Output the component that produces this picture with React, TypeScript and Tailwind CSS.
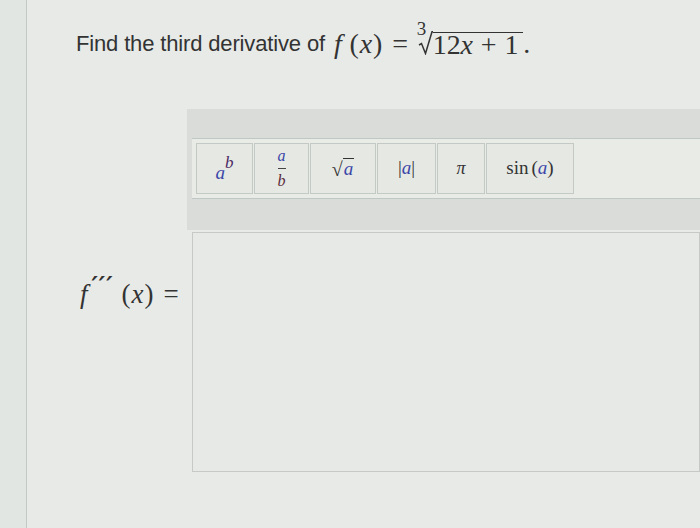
import React from "react";

// ---------------------------------------------------------------------------
// Small math helpers (serif italic, like the rendered TeX in the page)
// ---------------------------------------------------------------------------
const MATH = "font-['Liberation_Serif','DejaVu_Serif',serif]";

function V({ children, c = "" }: { children: React.ReactNode; c?: string }) {
  return <span className={`italic ${c}`}>{children}</span>;
}

// radical sign drawn as a stroke, the bar is the content's top border
function RadicalTick() {
  return (
    <svg width="15" height="24" viewBox="0 0 15 24" className="shrink-0">
      <path d="M1 14 L3.5 12.5 L7.5 22.5 L14 0.8 L15 0.8" fill="none" stroke="#333" strokeWidth="1.5" />
    </svg>
  );
}

// ---------------------------------------------------------------------------
// Toolbar buttons
// ---------------------------------------------------------------------------
const BTN =
  "flex items-center justify-center h-[51px] border border-[#c3cac6] bg-[#e6e8e4] text-[#333] " +
  MATH;

function Toolbar() {
  return (
    <div className="flex items-center gap-[1px] border-y border-[#bfc8c4] bg-[#e9ebe7] pl-[4px] py-[4px]">
      <div className={`${BTN} w-[57px] text-[19px]`}>
        <span className="relative top-[5px]">
          <V c="text-[#3a46a8]">a</V>
        </span>
        <span className="relative -top-[6px] text-[17px]">
          <V c="text-[#4b2a63]">b</V>
        </span>
      </div>
      <div className={`${BTN} w-[55px] text-[16px]`}>
        <div className="flex flex-col items-center leading-none">
          <V c="text-[#3a46a8]">a</V>
          <span className="my-[4px] block h-[1px] w-[8px] bg-[#444]" />
          <V c="text-[#5a2a3a]">b</V>
        </div>
      </div>
      <div className={`${BTN} w-[66px] text-[19px]`}>
        <span className="text-[20px]">√</span>
        <span className="border-t border-[#333] leading-[20px] px-[1px]">
          <V c="text-[#3a46a8]">a</V>
        </span>
      </div>
      <div className={`${BTN} w-[59px] text-[19px]`}>
        <span>|</span>
        <V c="text-[#3a46a8]">a</V>
        <span>|</span>
      </div>
      <div className={`${BTN} w-[48px] text-[18px]`}>
        <V>π</V>
      </div>
      <div className={`${BTN} w-[88px] text-[19px]`}>
        <span>sin</span>
        <span className="ml-[3px]">(</span>
        <V c="text-[#3a46a8]">a</V>
        <span>)</span>
      </div>
    </div>
  );
}

// ---------------------------------------------------------------------------
// Page
// ---------------------------------------------------------------------------
export default function App() {
  return (
    <div className="flex w-[700px] h-[528px] overflow-hidden bg-[#e8eae7] text-[#333]">
      {/* left page edge */}
      <div className="w-[27px] shrink-0 border-r border-[#c4c8c5] bg-[#e2e6e3]" />

      <div className="flex-1 flex flex-col">
        {/* Question */}
        <div className="pl-[49px] h-[58px] flex items-end text-[22px] leading-[26px] font-['Liberation_Sans',Arial,sans-serif] tracking-[-0.15px]">
          <span className="mb-[1px]">Find the third derivative of&nbsp;</span>
          <span className={`${MATH} text-[28px] leading-[28px] flex items-end ml-[3px]`}>
            <V>f</V>
            <span className="ml-[8px]">(</span>
            <V c="mx-[1px]">x</V>
            <span>)</span>
            <span className="mx-[10px]">=</span>
            <span className="relative flex items-end">
              <span className="absolute left-[-1px] -top-[12px] text-[19px] leading-[19px]">3</span>
              <span className="mb-[3px]">
                <RadicalTick />
              </span>
              <span className="border-t-[1.5px] border-[#333] leading-[24px] pr-[3px] mb-[1px]">
                12<V>x</V>
                <span className="mx-[8px]">+</span>
                <span className="mr-[2px]">1</span>
              </span>
            </span>
            <span>.</span>
          </span>
        </div>

        {/* Answer block */}
        <div className="mt-[51px] flex">
          <div
            className={`w-[160px] shrink-0 pl-[53px] flex items-center pt-[8px] ${MATH} text-[27px]`}
          >
            <V>f</V>
            <span className="relative -top-[9px] ml-[4px] text-[24px] tracking-[1px] font-bold italic font-['DejaVu_Sans',sans-serif]">
              ′′′
            </span>
            <span className="ml-[8px]">(</span>
            <V c="mx-[1px]">x</V>
            <span>)</span>
            <span className="ml-[10px]">=</span>
          </div>

          <div className="flex-1 flex flex-col">
            <div className="bg-[#d9dcd8] pl-[5px] pt-[29px] pb-[31px]">
              <Toolbar />
            </div>
            <div className="ml-[5px] mt-[2px] h-[240px] border border-[#c6c9c6] bg-[#e7e9e6]" />
          </div>
        </div>
      </div>
    </div>
  );
}
